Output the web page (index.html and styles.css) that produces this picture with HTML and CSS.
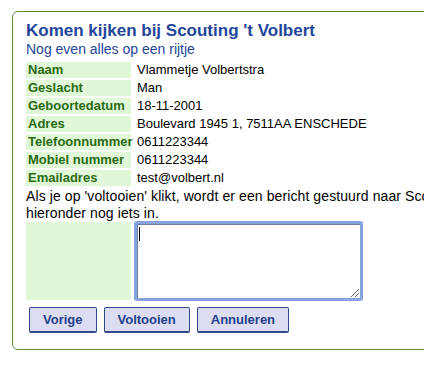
FILE: index.html
```html
<!DOCTYPE html>
<html>
<head>
<meta charset="utf-8">
<link rel="stylesheet" href="styles.css">
</head>
<body>
<div class="box">
  <h1 class="title">Komen kijken bij Scouting 't Volbert</h1>
  <p class="subtitle">Nog even alles op een rijtje</p>
  <div class="rows">
    <div class="label">Naam</div><div class="value">Vlammetje Volbertstra</div>
    <div class="label">Geslacht</div><div class="value">Man</div>
    <div class="label">Geboortedatum</div><div class="value">18-11-2001</div>
    <div class="label">Adres</div><div class="value">Boulevard 1945 1, 7511AA ENSCHEDE</div>
    <div class="label">Telefoonnummer</div><div class="value">0611223344</div>
    <div class="label">Mobiel nummer</div><div class="value">0611223344</div>
    <div class="label">Emailadres</div><div class="value">test@volbert.nl</div>
  </div>
  <p class="info">Als je op 'voltooien' klikt, wordt er een bericht gestuurd naar Scouting 't Volbert. Heb je nog vragen, vul ze dan<br>hieronder nog iets in.</p>
  <div class="rows comment-row">
    <div class="label"></div>
    <div class="textarea"><span class="caret"></span><span class="grip"></span></div>
  </div>
  <div class="buttons">
    <button class="btn">Vorige</button>
    <button class="btn">Voltooien</button>
    <button class="btn">Annuleren</button>
  </div>
</div>
</body>
</html>
```
FILE: styles.css
```css
html, body {
  margin: 0;
  padding: 0;
  overflow: hidden;
  background: #ffffff;
}
body {
  font-family: "Liberation Sans", Arial, sans-serif;
  color: #000;
  width: 424px;
  height: 384px;
}
.box {
  margin: 11px 0 0 12px;
  width: 700px;
  border: 1px solid #5a8a3c;
  border-radius: 6px;
  padding: 9px 12px 16px 13px;
}
.title {
  margin: 0;
  font-size: 17px;
  line-height: 20px;
  font-weight: bold;
  color: #23469a;
}
.subtitle {
  margin: 0;
  font-size: 14px;
  line-height: 17px;
  color: #23469a;
}
.rows {
  display: grid;
  grid-template-columns: 105px 1fr;
  column-gap: 2px;
  row-gap: 2px;
  margin-top: 4px;
}
.label {
  background: #e0f8d8;
  color: #2b6a12;
  font-weight: bold;
  font-size: 13px;
  line-height: 16px;
  height: 16px;
  padding-left: 2px;
  white-space: nowrap;
}
.value {
  font-size: 13px;
  line-height: 16px;
  padding-left: 4px;
  white-space: nowrap;
}
.info {
  margin: 2px 0 0 0;
  font-size: 14px;
  line-height: 17px;
  letter-spacing: 0.1px;
}
.comment-row {
  margin-top: 0;
  grid-template-columns: 105px 230px;
  column-gap: 3px;
}
.comment-row .label {
  height: 78px;
}
.textarea {
  position: relative;
  box-sizing: border-box;
  width: 229px;
  height: 80px;
  margin-top: -1px;
  border: 3px solid #86a3dd;
  border-radius: 3px;
  background: #fff;
  box-shadow: inset 1px 1px 0 #6f7f9f;
}
.caret {
  position: absolute;
  left: 2px;
  top: 3px;
  width: 1px;
  height: 14px;
  background: #000;
}
.grip {
  position: absolute;
  right: 1px;
  bottom: 1px;
  width: 8px;
  height: 8px;
  background: linear-gradient(135deg, transparent 45%, #666 45%, #666 55%, transparent 55%, transparent 70%, #666 70%, #666 80%, transparent 80%);
}
.buttons {
  display: flex;
  gap: 7px;
  margin: 6px 0 0 3px;
}
.btn {
  font-family: "Liberation Sans", Arial, sans-serif;
  font-size: 13px;
  font-weight: bold;
  color: #253f8c;
  background: #dcdcf2;
  border: 1px solid #34488c;
  border-bottom-width: 2px;
  border-radius: 2px;
  height: 26px;
  padding: 0 13px;
  margin: 0;
}
```
